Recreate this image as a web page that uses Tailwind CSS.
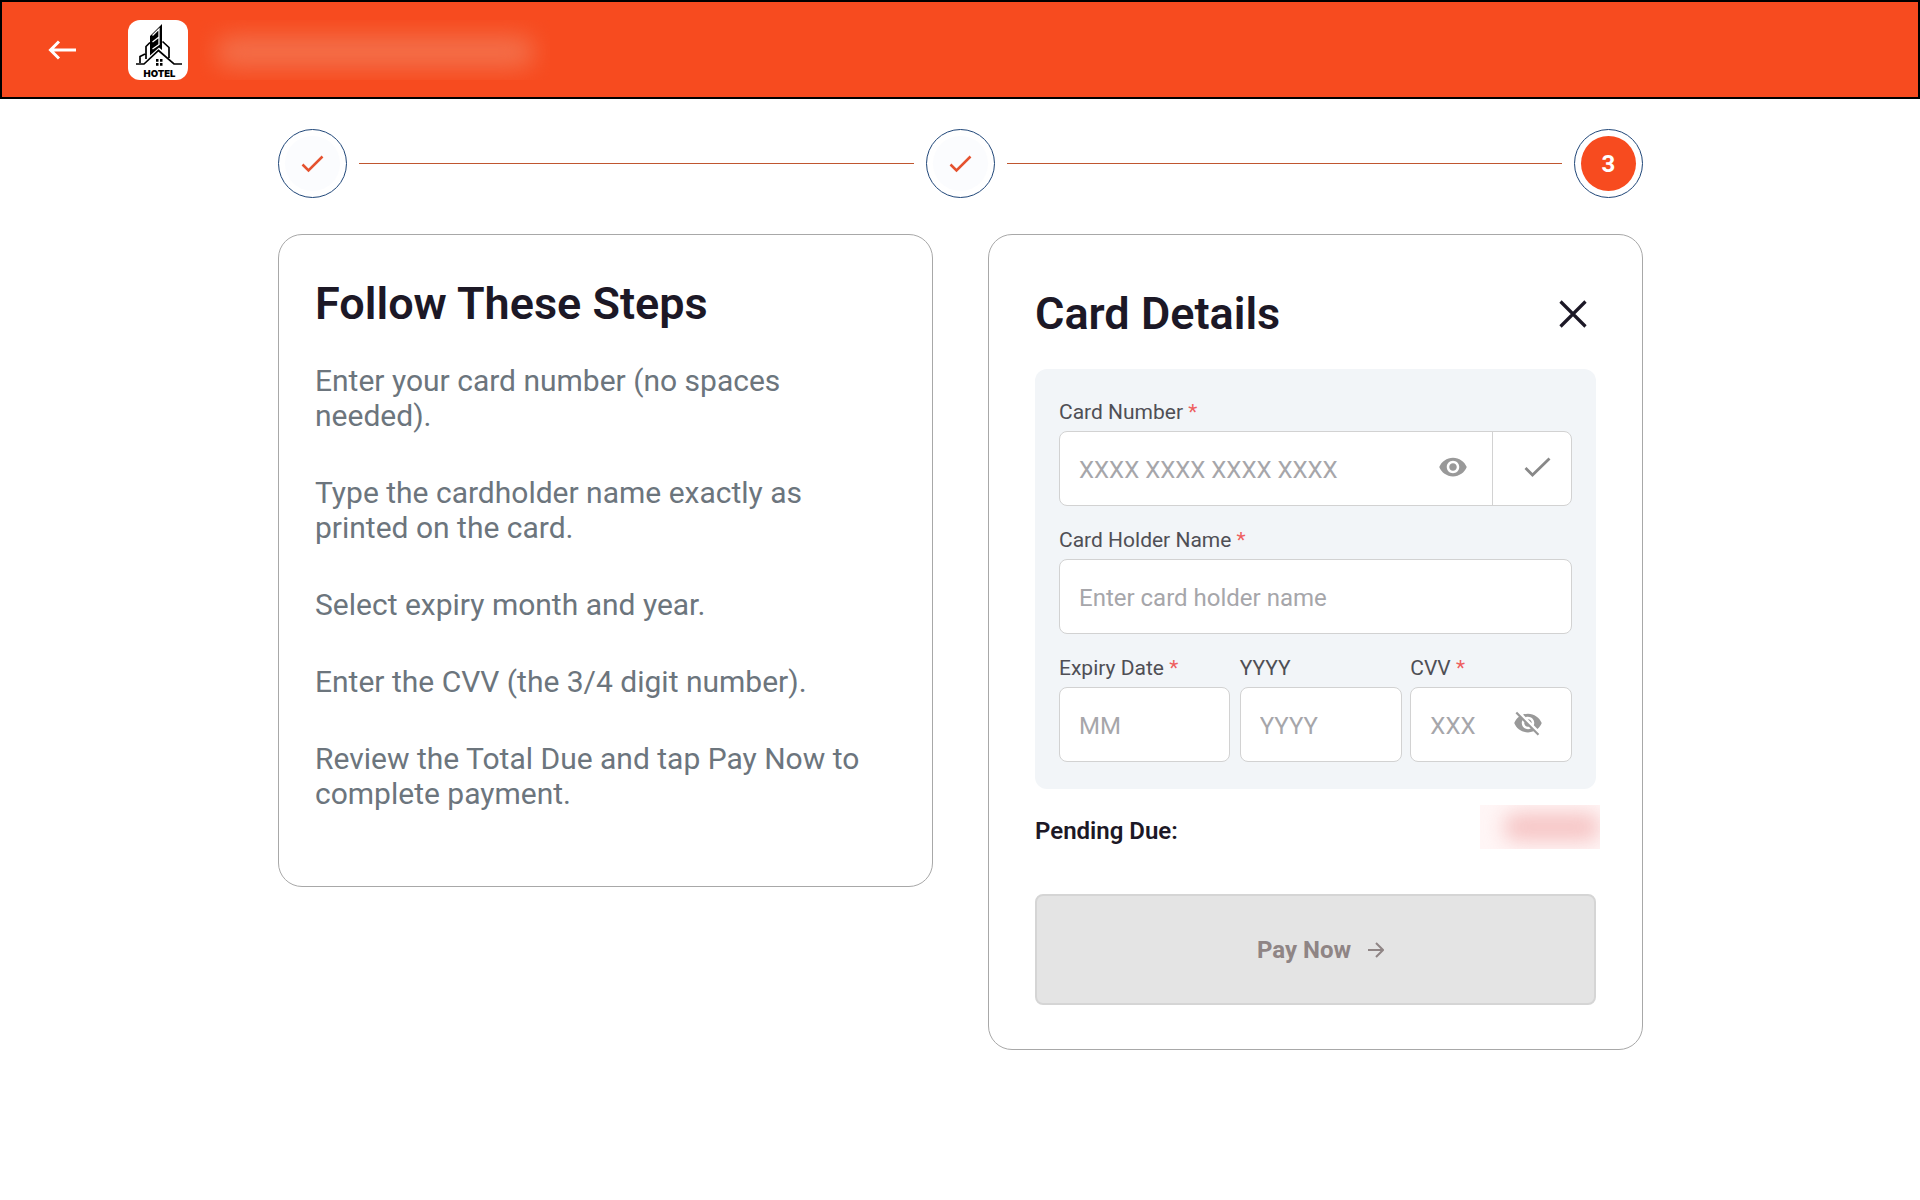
<!DOCTYPE html>
<html lang="en">
<head>
<meta charset="utf-8">
<meta name="viewport" content="width=device-width, initial-scale=1">
<title>Card Details</title>
<script src="https://cdn.jsdelivr.net/npm/@tailwindcss/browser@4"></script>
</head>
<body class="min-h-screen bg-white font-['Roboto',sans-serif] text-[#1c1826]">
<header class="flex h-[99px] items-center border-2 border-black bg-[#f74b1f] pl-[43px]">
  <button type="button" aria-label="Back" class="mr-[49px] flex size-[34px] items-center justify-center text-white">
    <svg class="h-[20px] w-[28px]" viewBox="0 0 28 20" fill="none" stroke="currentColor" stroke-width="3"><path d="M28 10H3M11 1.500L2.500 10l8.500 8.500"/></svg>
  </button>
  <svg role="img" aria-label="Hotel" class="size-[60px] rounded-xl bg-white" viewBox="0 0 60 60">
    <path d="M22 16L34 4v26l-3-2.500-9 8z" fill="#000"/>
    <path d="M24.500 15.500L31 9V25M24.500 22l6.500-5M24.500 29l6.500-4.500" stroke="#fff" stroke-width="1.300" fill="none"/>
    <path d="M8 44h8L30.500 30.500 46 44h8M12 43v-6.500l5-2.500M18 39V26.500l4-4M34.500 21.500l6.500 6V38" stroke="#000" stroke-width="1.700" fill="none"/>
    <path d="M28 39h2.500v2.800H28zm4 0h2.500v2.800H32zm-4 4h2.500v2.800H28zm4 0h2.500v2.800H32z"/>
    <text x="31.500" y="57" text-anchor="middle" font-family="Inter, sans-serif" font-weight="900" font-size="9.500">HOTEL</text>
  </svg>
  <div class="ml-[12px] flex h-[60px] w-[350px] items-center justify-center overflow-hidden" aria-hidden="true">
    <div class="mt-[4px] h-[32px] w-[320px] rounded-2xl bg-[#f3704b] blur-[12px]"></div>
  </div>
</header>

<main class="mx-auto max-w-[1366px] pt-[30px] pl-px">
  <ol class="flex items-center gap-[12px]" aria-label="Progress">
    <li class="flex size-[69px] shrink-0 items-center justify-center rounded-full border border-[#1f4678]">
      <span class="flex size-[55px] items-center justify-center rounded-full bg-[#fbfcfe]"><svg class="h-[18px] w-[23px]" viewBox="0 0 23 18" fill="none" stroke="#e5522f" stroke-width="2.500" role="img" aria-label="Step 1 done"><path d="M1.500 9.500l6 6L21.500 1.500"/></svg></span>
    </li>
    <li class="h-px flex-1 bg-[#c0562f]" role="presentation"></li>
    <li class="flex size-[69px] shrink-0 items-center justify-center rounded-full border border-[#1f4678]">
      <span class="flex size-[55px] items-center justify-center rounded-full bg-[#fbfcfe]"><svg class="h-[18px] w-[23px]" viewBox="0 0 23 18" fill="none" stroke="#e5522f" stroke-width="2.500" role="img" aria-label="Step 2 done"><path d="M1.500 9.500l6 6L21.500 1.500"/></svg></span>
    </li>
    <li class="h-px flex-1 bg-[#c0562f]" role="presentation"></li>
    <li class="flex size-[69px] shrink-0 items-center justify-center rounded-full border border-[#1f4678]" aria-current="step">
      <span class="flex size-[55px] items-center justify-center rounded-full bg-[#f74b1f] text-2xl font-bold text-white">3</span>
    </li>
  </ol>

  <div class="mt-[36px] grid grid-cols-2 items-start gap-[55px]">
    <section class="rounded-3xl border border-[#a8a8a8] px-[36px] pt-[41px] pb-[75px]">
      <h2 class="text-[45px] leading-[56px] font-semibold">Follow These Steps</h2>
      <div class="mt-[31px] flex flex-col gap-[42px] text-[30px] leading-[35px] text-[#6c757d]">
        <p>Enter your card number (no spaces needed).</p>
        <p>Type the cardholder name exactly as printed on the card.</p>
        <p>Select expiry month and year.</p>
        <p>Enter the CVV (the 3/4 digit number).</p>
        <p>Review the Total Due and tap Pay Now to complete payment.</p>
      </div>
    </section>

    <form class="rounded-3xl border border-[#a8a8a8] px-[46px] pt-[51px] pb-[44px]">
      <div class="flex items-center justify-between pr-[6px]">
        <h2 class="text-[45px] leading-[56px] font-semibold">Card Details</h2>
        <button type="button" aria-label="Close" class="flex size-[34px] items-center justify-center">
          <svg class="size-[28px]" viewBox="0 0 28 28" fill="none" stroke="currentColor" stroke-width="3.200"><path d="M1.500 1.500l25 25M26.500 1.500l-25 25"/></svg>
        </button>
      </div>

      <div class="mt-[27px] flex flex-col gap-[21px] rounded-xl bg-[#f2f5f8] px-[24px] pt-[30px] pb-[27px] text-[24px]">
        <div>
          <label for="number" class="block h-[32px] text-[21px] leading-[26px] text-[#4f4f55]">Card Number <span class="text-[#ee5f5f]">*</span></label>
          <div class="flex h-[75px] items-stretch rounded-lg border border-[#d2d2d2] bg-white">
            <input id="number" type="text" placeholder="XXXX XXXX XXXX XXXX" class="min-w-0 flex-1 rounded-lg pt-[3px] pl-[19px] outline-none placeholder:text-[#a6a6aa]">
            <button type="button" aria-label="Show card number" class="flex w-[78px] items-center justify-center pb-[4px] text-[#999]">
              <svg class="size-[30px]" viewBox="0 0 24 24" fill="currentColor"><path d="M12 4.500C7 4.500 2.730 7.610 1 12c1.730 4.390 6 7.500 11 7.500s9.270-3.110 11-7.500c-1.730-4.390-6-7.500-11-7.500zM12 17c-2.760 0-5-2.240-5-5s2.240-5 5-5 5 2.240 5 5-2.240 5-5 5zm0-8c-1.660 0-3 1.340-3 3s1.340 3 3 3 3-1.340 3-3-1.340-3-3-3z"/></svg>
            </button>
            <button type="button" aria-label="Confirm card number" class="flex w-[79px] items-center justify-center border-l border-[#d2d2d2] pb-[4px] pl-[10px] text-[#888]">
              <svg class="h-[20px] w-[27px]" viewBox="0 0 27 20" fill="none" stroke="currentColor" stroke-width="2.800"><path d="M1.500 11l7 7L25.500 1.500"/></svg>
            </button>
          </div>
        </div>
        <div>
          <label for="holder" class="block h-[32px] text-[21px] leading-[26px] text-[#4f4f55]">Card Holder Name <span class="text-[#ee5f5f]">*</span></label>
          <input id="holder" type="text" placeholder="Enter card holder name" class="block h-[75px] w-full rounded-lg border border-[#d2d2d2] bg-white px-[19px] pt-[3px] outline-none placeholder:text-[#a6a6aa]">
        </div>
        <div class="flex">
          <div class="mr-[10px] min-w-0 flex-[171]">
            <label for="month" class="block h-[32px] text-[21px] leading-[26px] text-[#4f4f55]">Expiry Date <span class="text-[#ee5f5f]">*</span></label>
            <input id="month" type="text" placeholder="MM" class="block h-[75px] w-full rounded-lg border border-[#d2d2d2] bg-white px-[19px] pt-[3px] outline-none placeholder:text-[#a6a6aa]">
          </div>
          <div class="mr-[8px] min-w-0 flex-[163]">
            <label for="year" class="block h-[32px] text-[21px] leading-[26px] text-[#4f4f55]">YYYY</label>
            <input id="year" type="text" placeholder="YYYY" class="block h-[75px] w-full rounded-lg border border-[#d2d2d2] bg-white px-[19px] pt-[3px] outline-none placeholder:text-[#a6a6aa]">
          </div>
          <div class="min-w-0 flex-[162]">
            <label for="cvv" class="block h-[32px] text-[21px] leading-[26px] text-[#4f4f55]">CVV <span class="text-[#ee5f5f]">*</span></label>
            <div class="flex h-[75px] items-stretch rounded-lg border border-[#d2d2d2] bg-white">
              <input id="cvv" type="text" placeholder="XXX" class="min-w-0 flex-1 rounded-lg pt-[3px] pl-[19px] outline-none placeholder:text-[#a6a6aa]">
              <button type="button" aria-label="Show CVV" class="mr-[28px] flex w-[30px] items-center justify-center pb-[4px] text-[#999]">
                <svg class="size-[30px]" viewBox="0 0 24 24" fill="currentColor"><path d="M12 7c2.760 0 5 2.240 5 5 0 .65-.13 1.260-.36 1.830l2.920 2.920c1.510-1.260 2.700-2.890 3.430-4.750-1.730-4.390-6-7.500-11-7.500-1.400 0-2.740.25-3.980.7l2.160 2.160C10.740 7.130 11.350 7 12 7zM2 4.270l2.280 2.280.46.46C3.080 8.300 1.780 10.020 1 12c1.730 4.390 6 7.500 11 7.500 1.550 0 3.030-.3 4.380-.84l.42.42L19.730 22 21 20.730 3.270 3 2 4.270zM7.530 9.800l1.550 1.550c-.05.21-.08.43-.08.65 0 1.660 1.340 3 3 3 .22 0 .44-.03.65-.08l1.550 1.550c-.67.33-1.410.53-2.200.53-2.760 0-5-2.240-5-5 0-.79.2-1.530.53-2.200zm4.310-.78l3.150 3.150.02-.16c0-1.660-1.340-3-3-3l-.17.01z"/></svg>
              </button>
            </div>
          </div>
        </div>
      </div>

      <div class="-mr-[4px] mt-[16px] flex items-end justify-between">
        <span class="pb-[4px] text-[24px] leading-[28px] font-semibold">Pending Due:</span>
        <span class="flex h-[44px] w-[120px] items-center justify-end overflow-hidden bg-[#fff6f6]" aria-hidden="true"><span class="h-[28px] w-[96px] rounded-xl bg-[#f6c4c4] blur-[10px]"></span></span>
      </div>

      <button type="submit" disabled class="mt-[45px] flex h-[111px] w-full items-center justify-center gap-[17px] rounded-lg border-2 border-[#d5d5d5] bg-[#e4e4e4] pl-[10px] text-[24px] font-bold text-[#8f8585]">
        Pay Now
        <svg class="size-[16px]" viewBox="0 0 16 16" fill="none" stroke="currentColor" stroke-width="2"><path d="M0 8h15M8 1l7 7-7 7"/></svg>
      </button>
    </form>
  </div>
</main>
</body>
</html>
